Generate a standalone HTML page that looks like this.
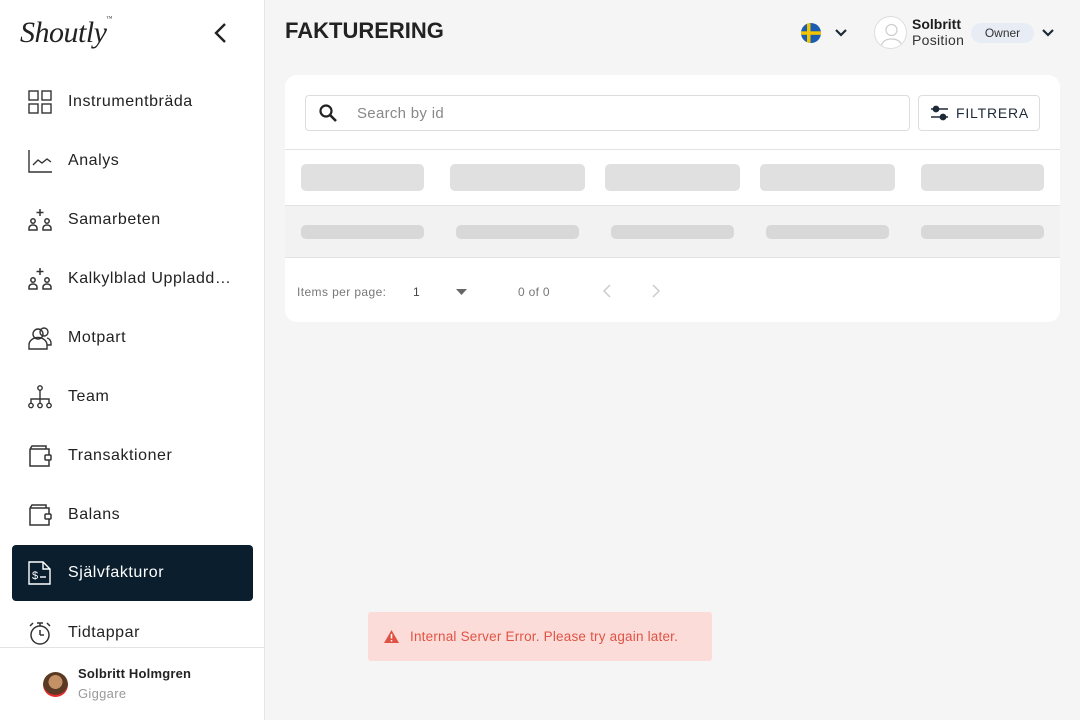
<!DOCTYPE html>
<html><head><meta charset="utf-8"><style>
*{box-sizing:border-box;margin:0;padding:0}
body{width:1080px;height:720px;overflow:hidden;background:#f5f5f5;font-family:"Liberation Sans",sans-serif;color:#1d1d1d;position:relative}
.sb{position:absolute;left:0;top:0;width:265px;height:720px;background:#fff;border-right:1px solid #e6e6e6}
.logo{position:absolute;left:20px;top:16px;font-family:"Liberation Serif",serif;font-style:italic;font-size:30px;color:#222;letter-spacing:-0.5px}
.item{position:absolute;left:12px;width:241px;height:56px;display:flex;align-items:center;font-size:16px;letter-spacing:0.55px;color:#222}
.item svg{position:absolute;left:16px;width:24px;height:24px}
.item span{position:absolute;left:56px}
.item.act{background:#0a1e2e;border-radius:4px;color:#fff}
.abs{position:absolute}
.sk{position:absolute;background:#e0e0e0;border-radius:5px}
.sk2{position:absolute;background:#d8d8d8;border-radius:5px;height:14px;top:225px}
</style></head><body>
<div class="sb">
<div class="logo">Shoutly<span style="font-size:6px;vertical-align:top">™</span></div>
<svg class="abs" style="left:212px;top:22px" width="18" height="22" viewBox="0 0 18 22"><path d="M13 2 L4 11 L13 20" fill="none" stroke="#222" stroke-width="2.4"/></svg>

<div class="item" style="top:74px"><svg viewBox="0 0 24 24" fill="none" stroke="#333" stroke-width="1.4"><rect x="1" y="1" width="9" height="9"/><rect x="14" y="1" width="9" height="9"/><rect x="1" y="14" width="9" height="9"/><rect x="14" y="14" width="9" height="9"/></svg><span>Instrumentbräda</span></div>
<div class="item" style="top:133px"><svg viewBox="0 0 24 24" fill="none" stroke="#333" stroke-width="1.4"><path d="M1 1V23H24M5 16l5-5 4 3 5-4 4 3"/></svg><span>Analys</span></div>
<div class="item" style="top:192px"><svg viewBox="0 0 24 24" fill="none" stroke="#333" stroke-width="1.5"><path d="M12 1v7M8.5 4.5h7"/><circle cx="5" cy="13" r="2.2"/><circle cx="19" cy="13" r="2.2"/><path d="M1 22v-2a4 3 0 0 1 8 0v2zM15 22v-2a4 3 0 0 1 8 0v2z"/></svg><span>Samarbeten</span></div>
<div class="item" style="top:251px"><svg viewBox="0 0 24 24" fill="none" stroke="#333" stroke-width="1.5"><path d="M12 1v7M8.5 4.5h7"/><circle cx="5" cy="13" r="2.2"/><circle cx="19" cy="13" r="2.2"/><path d="M1 22v-2a4 3 0 0 1 8 0v2zM15 22v-2a4 3 0 0 1 8 0v2z"/></svg><span>Kalkylblad Uppladd…</span></div>
<div class="item" style="top:310px"><svg viewBox="0 0 24 24" fill="none" stroke="#333" stroke-width="1.4"><circle cx="10" cy="8" r="5"/><circle cx="16" cy="6" r="4"/><path d="M1 23v-4a6 5 0 0 1 18 0v4zM19 12a5 5 0 0 1 4 5v2h-4"/></svg><span>Motpart</span></div>
<div class="item" style="top:369px"><svg viewBox="0 0 24 24" fill="none" stroke="#333" stroke-width="1.4"><circle cx="12" cy="3" r="2.2"/><path d="M12 5v8M3 18v-4h18v4M12 13v5"/><circle cx="3" cy="20.5" r="2.2"/><circle cx="12" cy="20.5" r="2.2"/><circle cx="21" cy="20.5" r="2.2"/></svg><span>Team</span></div>
<div class="item" style="top:428px"><svg viewBox="0 0 24 24" fill="none" stroke="#333" stroke-width="1.5"><path d="M2 5V22H21V16M2 5h19v6M2 5l2-3h14v3"/><rect x="17" y="11" width="6" height="5" rx="1"/></svg><span>Transaktioner</span></div>
<div class="item" style="top:487px"><svg viewBox="0 0 24 24" fill="none" stroke="#333" stroke-width="1.5"><path d="M2 5V22H21V16M2 5h19v6M2 5l2-3h14v3"/><rect x="17" y="11" width="6" height="5" rx="1"/></svg><span>Balans</span></div>
<div class="item act" style="top:545px"><svg viewBox="0 0 24 24" fill="none" stroke="#fff" stroke-width="1.4"><path d="M1 1H15L22 8V23H1Z M15 1V8H22"/><text x="4" y="18" font-size="11" fill="#fff" stroke="none" font-family="Liberation Sans">$</text><path d="M12 16h6"/></svg><span>Självfakturor</span></div>
<div class="item" style="top:605px"><svg viewBox="0 0 24 24" fill="none" stroke="#333" stroke-width="1.5"><circle cx="12" cy="14" r="9"/><path d="M9 2h6M12 2v3M12 14V9M12 14h4M2 5l3-3M22 5l-3-3"/></svg><span>Tidtappar</span></div>

<div class="abs" style="left:0;top:647px;width:264px;border-top:1px solid #e3e3e3"></div>
<div class="abs" style="left:43px;top:672px;width:25px;height:25px;border-radius:50%;background:radial-gradient(circle at 50% 40%,#c49066 0 35%,#5a3a24 36% 65%,#e62c2c 66%)"></div>
<div class="abs" style="left:78px;top:666px;font-size:13px;font-weight:bold;color:#222;letter-spacing:0.2px">Solbritt Holmgren</div>
<div class="abs" style="left:78px;top:686px;font-size:13px;color:#999;letter-spacing:0.3px">Giggare</div>
</div>

<div class="abs" style="left:285px;top:18px;font-size:22px;font-weight:bold;color:#222">FAKTURERING</div>
<svg class="abs" style="left:801px;top:23px" width="20" height="20" viewBox="0 0 20 20"><clipPath id="c"><circle cx="10" cy="10" r="10"/></clipPath><g clip-path="url(#c)"><rect width="20" height="20" fill="#1a5cb0"/><rect x="6" width="3.5" height="20" fill="#f5c400"/><rect y="8.3" width="20" height="3.5" fill="#f5c400"/></g></svg>
<svg class="abs" style="left:834px;top:28px" width="14" height="10" viewBox="0 0 14 10"><path d="M2 2l5 5 5-5" fill="none" stroke="#1d2b38" stroke-width="2.2"/></svg>
<div class="abs" style="left:874px;top:16px;width:33px;height:33px;border-radius:50%;border:1px solid #ddd;background:#fff;overflow:hidden"><svg width="33" height="33" viewBox="0 0 33 33" fill="none" stroke="#ccc" stroke-width="1.2"><circle cx="16.5" cy="13" r="5.5"/><path d="M6 30c1-6 5-8 10.5-8s9.5 2 10.5 8"/></svg></div>
<div class="abs" style="left:912px;top:16px;font-size:14px;font-weight:bold;color:#1d1d1d">Solbritt</div>
<div class="abs" style="left:912px;top:32px;font-size:14px;color:#333;letter-spacing:0.3px">Position</div>
<div class="abs" style="left:971px;top:23px;width:63px;height:20px;border-radius:10px;background:#e8edf5;font-size:12px;text-align:center;line-height:20px;color:#333">Owner</div>
<svg class="abs" style="left:1041px;top:28px" width="14" height="10" viewBox="0 0 14 10"><path d="M2 2l5 5 5-5" fill="none" stroke="#1d2b38" stroke-width="2.2"/></svg>

<div class="abs" style="left:285px;top:75px;width:775px;height:247px;background:#fff;border-radius:12px"></div>
<div class="abs" style="left:305px;top:95px;width:605px;height:36px;border:1px solid #ddd;border-radius:4px"></div>
<svg class="abs" style="left:318px;top:103px" width="20" height="20" viewBox="0 0 20 20"><circle cx="8" cy="8" r="5.5" fill="none" stroke="#222" stroke-width="2.2"/><path d="M12 12l6 6" stroke="#222" stroke-width="2.6"/></svg>
<div class="abs" style="left:357px;top:105px;font-size:15px;color:#888;letter-spacing:0.3px">Search by id</div>
<div class="abs" style="left:918px;top:95px;width:122px;height:36px;border:1px solid #ddd;border-radius:4px"></div>
<svg class="abs" style="left:931px;top:105px" width="17" height="16" viewBox="0 0 17 16" stroke="#1d2b38" stroke-width="1.8"><path d="M0 4h17M0 12h17" stroke-width="1.6"/><circle cx="5" cy="4" r="2.5" fill="#1d2b38"/><circle cx="12" cy="12" r="2.5" fill="#1d2b38"/></svg>
<div class="abs" style="left:956px;top:105px;font-size:14px;letter-spacing:0.8px;color:#1d2b38">FILTRERA</div>

<div class="abs" style="left:285px;top:149px;width:775px;border-top:1px solid #e3e3e3"></div>
<div class="sk" style="left:301px;top:164px;width:123px;height:27px"></div>
<div class="sk" style="left:450px;top:164px;width:135px;height:27px"></div>
<div class="sk" style="left:605px;top:164px;width:135px;height:27px"></div>
<div class="sk" style="left:760px;top:164px;width:135px;height:27px"></div>
<div class="sk" style="left:921px;top:164px;width:123px;height:27px"></div>
<div class="abs" style="left:285px;top:205px;width:775px;height:53px;background:#f2f2f2;border-top:1px solid #e3e3e3;border-bottom:1px solid #e3e3e3"></div>
<div class="sk2" style="left:301px;width:123px"></div>
<div class="sk2" style="left:456px;width:123px"></div>
<div class="sk2" style="left:611px;width:123px"></div>
<div class="sk2" style="left:766px;width:123px"></div>
<div class="sk2" style="left:921px;width:123px"></div>
<div class="abs" style="left:297px;top:285px;font-size:12px;letter-spacing:0.4px;color:#777">Items per page:</div>
<div class="abs" style="left:413px;top:285px;font-size:12px;color:#444">1</div>
<svg class="abs" style="left:456px;top:289px" width="11" height="6"><path d="M0 0h11L5.5 6z" fill="#666"/></svg>
<div class="abs" style="left:518px;top:285px;font-size:12px;color:#777;letter-spacing:0.3px">0 of 0</div>
<svg class="abs" style="left:602px;top:284px" width="10" height="14"><path d="M8 1L2 7l6 6" fill="none" stroke="#ccc" stroke-width="1.5"/></svg>
<svg class="abs" style="left:651px;top:284px" width="10" height="14"><path d="M2 1l6 6-6 6" fill="none" stroke="#ccc" stroke-width="1.5"/></svg>

<div class="abs" style="left:368px;top:612px;width:344px;height:49px;background:#fcdcd9;border-radius:3px"></div>
<svg class="abs" style="left:384px;top:630px" width="15" height="13" viewBox="0 0 15 13"><path d="M7.5 0L15 13H0z" fill="#e05344"/><path d="M7.5 4v4.5M7.5 10v1.5" stroke="#fff" stroke-width="1.5"/></svg>
<div class="abs" style="left:410px;top:629px;font-size:13.5px;letter-spacing:0.2px;color:#e05344">Internal Server Error. Please try again later.</div>
</body></html>
